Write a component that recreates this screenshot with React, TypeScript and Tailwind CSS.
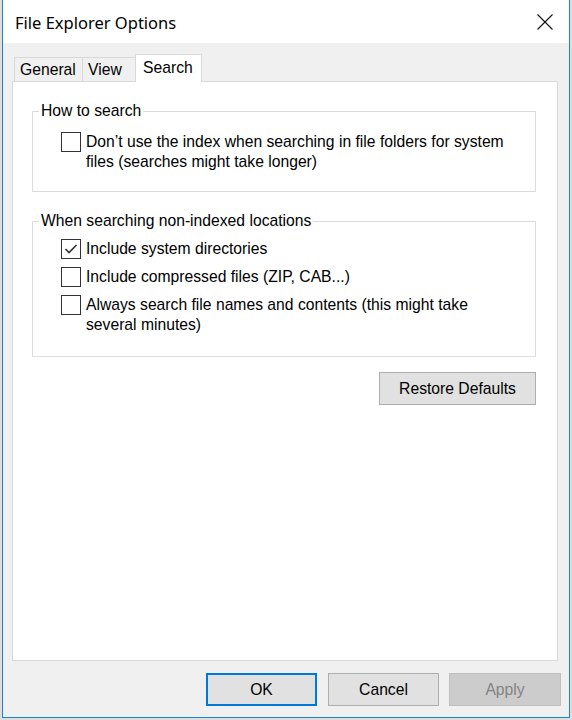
import React from "react";

const body = { fontFamily: '"Liberation Sans", Arial, sans-serif' } as React.CSSProperties;

function Check({ checked }: { checked?: boolean }) {
  return (
    <div className="w-[20px] h-[20px] shrink-0 border border-[#333333] bg-white">
      {checked && (
        <svg width="18" height="18" viewBox="0 0 18 18">
          <polyline points="3.5,9 7,12.5 14.5,5" fill="none" stroke="#333333" strokeWidth="1.6" />
        </svg>
      )}
    </div>
  );
}

function Row({ checked, children }: { checked?: boolean; children: React.ReactNode }) {
  return (
    <div className="flex items-start gap-[5px]">
      <Check checked={checked} />
      <div className="leading-[20px] text-black">{children}</div>
    </div>
  );
}

export default function App() {
  return (
    <div className="w-[572px] h-[720px] bg-[#dedede] overflow-hidden" style={body}>
      <div className="ml-[2px] w-[568px] h-[718px] border-l border-r border-b border-[#1a82d8] bg-[#f0f0f0] flex flex-col text-[15.7px]">
        {/* Title bar */}
        <div className="h-[43px] bg-white flex items-center justify-between pl-[12px] pr-[16px] shrink-0">
          <div
            className="text-[16.5px] text-black pt-[3px]"
            style={{ fontFamily: '"Noto Sans", "Open Sans", sans-serif' }}
          >
            File Explorer Options
          </div>
          <svg width="16" height="16" viewBox="0 0 16 16">
            <line x1="0.5" y1="0.5" x2="15.5" y2="15.5" stroke="#111" strokeWidth="1.1" />
            <line x1="15.5" y1="0.5" x2="0.5" y2="15.5" stroke="#111" strokeWidth="1.1" />
          </svg>
        </div>

        {/* Tabs */}
        <div className="mt-[11px] ml-[11px] h-[28px] -mb-px flex items-end relative z-10 shrink-0">
          <div className="w-[69px] h-[24px] mb-px border border-b-0 border-[#d9d9d9] bg-[#f0f0f0] pl-[5px] flex items-center text-black">
            General
          </div>
          <div className="w-[53px] h-[24px] mb-px border border-l-0 border-b-0 border-[#d9d9d9] bg-[#f0f0f0] pl-[5px] flex items-center text-black">
            View
          </div>
          <div className="-ml-px w-[67px] h-[28px] border border-b-0 border-[#d9d9d9] bg-white pl-[7px] pb-px flex items-center text-black">
            Search
          </div>
        </div>

        {/* Panel */}
        <div className="ml-[9px] w-[546px] h-[580px] border border-[#d9d9d9] bg-white shrink-0 flex flex-col">
          <fieldset className="ml-[19px] mr-[21px] mt-[19px] border border-[#dcdcdc]">
            <legend className="ml-[6px] px-[2px] leading-[20px] text-black">How to search</legend>
            <div className="pl-[28px] pr-[10px] pt-[11px] pb-[19px]">
              <Row>
                Don’t use the index when searching in file folders for system
                <br />
                files (searches might take longer)
              </Row>
            </div>
          </fieldset>

          <fieldset className="ml-[19px] mr-[21px] mt-[19px] border border-[#dcdcdc]">
            <legend className="ml-[6px] px-[2px] leading-[20px] text-black">
              When searching non-indexed locations
            </legend>
            <div className="pl-[28px] pr-[10px] pt-[8px] pb-[21px] flex flex-col gap-[8px]">
              <Row checked>Include system directories</Row>
              <Row>Include compressed files (ZIP, CAB...)</Row>
              <Row>
                Always search file names and contents (this might take
                <br />
                several minutes)
              </Row>
            </div>
          </fieldset>

          <div className="ml-[19px] mr-[21px] mt-[15px] flex justify-end">
            <button className="w-[157px] h-[33px] bg-[#e1e1e1] border border-[#adadad] text-black">
              Restore Defaults
            </button>
          </div>
        </div>

        {/* Bottom buttons */}
        <div className="mt-[12px] flex shrink-0">
          <button className="ml-[203px] w-[111px] h-[33px] bg-[#e1e1e1] border-2 border-[#0078d7] text-black">
            OK
          </button>
          <button className="ml-[11px] w-[111px] h-[33px] bg-[#e1e1e1] border border-[#adadad] text-black">
            Cancel
          </button>
          <button className="ml-[10px] w-[112px] h-[33px] bg-[#cccccc] border border-[#bfbfbf] text-[#838383]">
            Apply
          </button>
        </div>
      </div>
    </div>
  );
}
